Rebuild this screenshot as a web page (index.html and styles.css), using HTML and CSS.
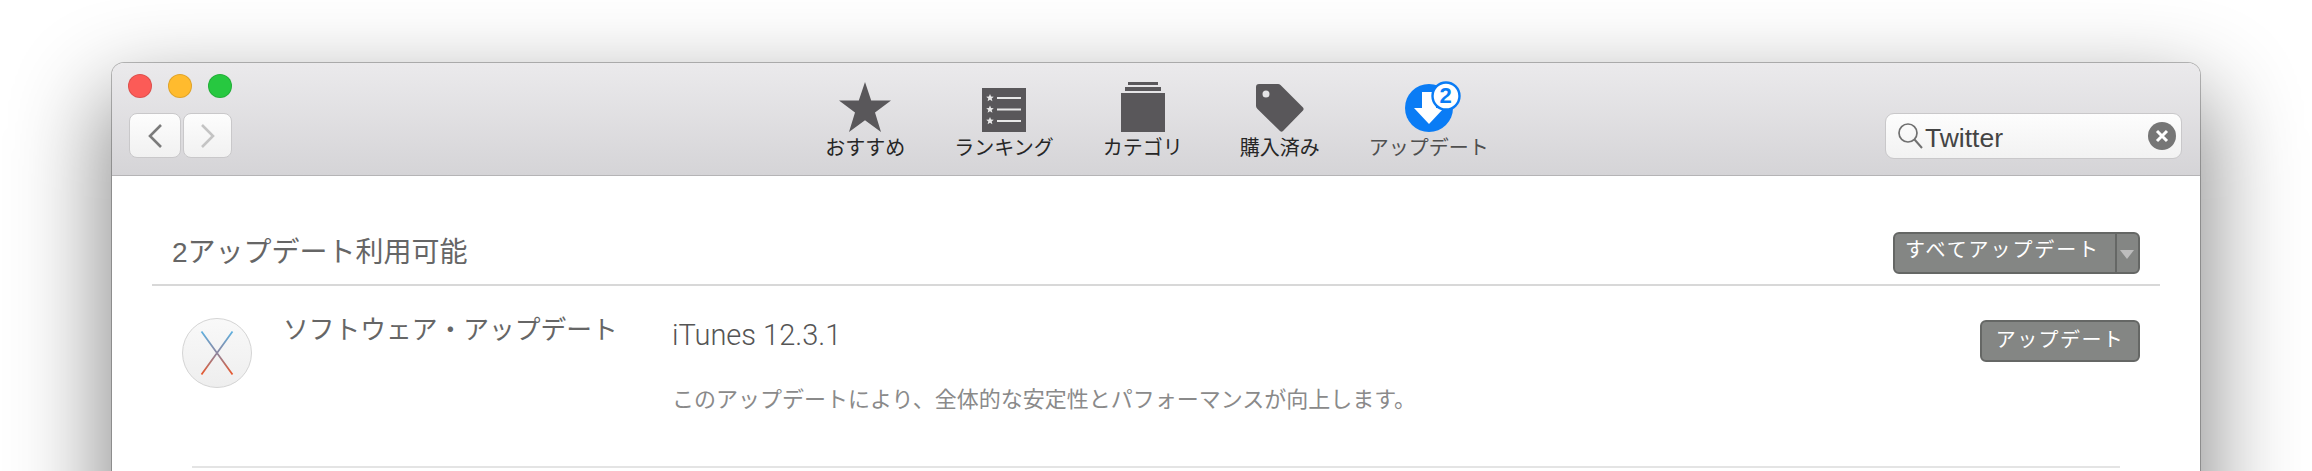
FILE: index.html
```html
<!DOCTYPE html>
<html lang="ja">

<head>
    <meta charset="UTF-8">
    <title>App Store</title>
    <link rel="stylesheet" href="styles.css">
</head>

<body>
    <div class="window">
        <header class="toolbar">
            <div class="leftControls">
                <div class="lights">
                    <span class="light red"></span>
                    <span class="light yellow"></span>
                    <span class="light green"></span>
                </div>
                <div class="navButtons">
                    <button class="nav back">
                        <svg width="16" height="26" viewBox="0 0 16 26"><path d="M14 2 3 13l11 11" fill="none" stroke="#7b7b7b" stroke-width="2.6"/></svg>
                    </button>
                    <button class="nav forward">
                        <svg width="16" height="26" viewBox="0 0 16 26"><path d="M2 2l11 11L2 24" fill="none" stroke="#c4c4c4" stroke-width="2.6"/></svg>
                    </button>
                </div>
            </div>

            <nav class="tabs">
                <div class="tab">
                    <svg width="52" height="50" viewBox="0 0 52 50"><path class="iconFill" d="M26 0l6.2 18.6H52L36 30.400l6 19.600L26 38.200 10 50l6-19.600L0 18.600h19.800z"/></svg>
                    <span>おすすめ</span>
                </div>
                <div class="tab">
                    <svg width="44" height="50" viewBox="0 0 44 50">
                        <rect class="iconFill" y="6" width="44" height="44"/>
                        <path d="M15 16h24M15 27.500h24M15 39h24" stroke="#e8e8e8" stroke-width="2"/>
                        <path d="M8 12l1.100 2.600 2.700.200-2.100 1.800.700 2.700L8 17.800l-2.400 1.500.700-2.700-2.100-1.800 2.700-.200zM8 23.500l1.100 2.600 2.700.200-2.100 1.800.700 2.700L8 29.300l-2.400 1.500.700-2.700-2.100-1.800 2.700-.200zM8 35l1.100 2.600 2.700.200-2.100 1.800.700 2.700L8 40.800l-2.400 1.500.700-2.700-2.100-1.800 2.700-.200z" fill="#e8e8e8"/>
                    </svg>
                    <span>ランキング</span>
                </div>
                <div class="tab">
                    <svg width="44" height="50" viewBox="0 0 44 50">
                        <rect class="iconFill" x="7" width="30" height="3"/>
                        <rect class="iconFill" x="4" y="5" width="36" height="4"/>
                        <rect class="iconFill" y="11" width="44" height="39"/>
                    </svg>
                    <span>カテゴリ</span>
                </div>
                <div class="tab purchased">
                    <svg width="48" height="50" viewBox="0 0 48 50"><path class="iconFill" fill-rule="evenodd" d="M3 2h19q1.500 0 2.500 1L47 25.500q1.200 1.500 0 3L27 49q-1.500 1.500-3 0L1.500 27Q0 25.500 0 24V5q0-3 3-3zM10 8.500a3.500 3.500 0 1 0 0 7 3.500 3.500 0 0 0 0-7z"/></svg>
                    <span>購入済み</span>
                </div>
                <div class="tab current">
                    <div class="updateIcon">
                        <svg width="62" height="52" viewBox="0 0 62 52">
                            <circle cx="24" cy="28" r="24" fill="#0a7cf5"/>
                            <path d="M17 12h14v16h8L24 44 9 28h8z" fill="#fff"/>
                            <circle cx="41" cy="16" r="13.500" fill="#fff" stroke="#0a7cf5" stroke-width="2.400"/>
                        </svg>
                        <span class="badge">2</span>
                    </div>
                    <span>アップデート</span>
                </div>
            </nav>

            <div class="searchWrap">
                <div class="search">
                    <svg width="26" height="28" viewBox="0 0 26 28"><circle cx="11" cy="11" r="9" fill="none" stroke="#707070" stroke-width="1.700"/><path d="M17.500 17.500 25 26" stroke="#707070" stroke-width="2"/></svg>
                    <span class="query">Twitter</span>
                    <span class="clear">
                        <svg width="14" height="14" viewBox="0 0 14 14"><path d="M2 2l10 10M12 2 2 12" stroke="#fff" stroke-width="3"/></svg>
                    </span>
                </div>
            </div>
        </header>

        <main class="content">
            <div class="sectionHead">
                <h2>2アップデート利用可能</h2>
                <div class="splitButton">
                    <span class="splitLabel">すべてアップデート</span>
                    <span class="splitArrow"></span>
                </div>
            </div>

            <div class="updateRow">
                <div class="appIcon">
                    <svg width="70" height="70" viewBox="0 0 70 70">
                        <defs>
                            <linearGradient id="xStroke" x1="0" y1="0" x2="0" y2="1">
                                <stop offset="0" stop-color="#5fb1e0"/>
                                <stop offset=".5" stop-color="#8d86a0"/>
                                <stop offset="1" stop-color="#e9582c"/>
                            </linearGradient>
                            <linearGradient id="discFill" x1="0" y1="0" x2="0" y2="1">
                                <stop offset="0" stop-color="#f9f9f9"/>
                                <stop offset="1" stop-color="#eeeeee"/>
                            </linearGradient>
                        </defs>
                        <circle cx="35" cy="35" r="34.500" fill="url(#discFill)" stroke="#d4d4d4"/>
                        <path d="M19.500 13.500 50.500 56.500M50.500 13.500 19.500 56.500" stroke="url(#xStroke)" stroke-width="1.800" fill="none"/>
                    </svg>
                </div>
                <div class="appName">ソフトウェア・アップデート</div>
                <div class="appInfo">
                    <div class="version">iTunes 12.3.1</div>
                    <p class="note">このアップデートにより、全体的な安定性とパフォーマンスが向上します。</p>
                </div>
                <button class="updateButton">アップデート</button>
            </div>
        </main>
    </div>
</body>

</html>
```

FILE: styles.css
```css
html,
body {
    margin: 0;
    height: 471px;
    overflow: hidden;
    background-color: #ffffff;
}

body {
    font-family: "Liberation Sans", "Noto Sans CJK JP", sans-serif;
    padding: 63px 112px 0;
    box-sizing: border-box;
}

.window {
    height: 600px;
    background-color: #ffffff;
    border-radius: 12px 12px 0 0;
    box-shadow: 0 0 0 1px rgba(0, 0, 0, 0.25), 0 40px 90px 10px rgba(0, 0, 0, 0.45);
}

.toolbar {
    display: grid;
    grid-template-columns: 1fr auto 1fr;
    height: 112px;
    background-image: linear-gradient(#ebeaec, #d5d4d7);
    border-bottom: 1px solid #b5b4b6;
    border-radius: 12px 12px 0 0;
}

.leftControls {
    padding: 11px 0 0 16px;
}

.lights {
    display: flex;
    gap: 16px;
}

.light {
    width: 22px;
    height: 22px;
    border-radius: 50%;
    border: 1px solid rgba(0, 0, 0, 0.12);
}

.red {
    background-color: #fc5b57;
}

.yellow {
    background-color: #ffbb2e;
}

.green {
    background-color: #27c840;
}

.navButtons {
    display: flex;
    gap: 2px;
    margin: 15px 0 0 1px;
}

.nav {
    display: flex;
    align-items: center;
    justify-content: center;
    width: 52px;
    height: 45px;
    padding: 0;
    background-image: linear-gradient(#fdfdfd, #f1f1f1);
    border: 1px solid #c9c8ca;
    border-radius: 8px;
}

.forward {
    width: 49px;
}

.tabs {
    display: flex;
    gap: 49px;
    padding: 19px 0 0 2px;
}

.tab {
    display: flex;
    flex-direction: column;
    align-items: center;
    font-size: 20px;
    line-height: 24px;
    color: #262626;
}

.tab svg {
    display: block;
}

.tab > span {
    margin-top: 4px;
}

.purchased {
    margin-left: 8px;
}

.iconFill {
    fill: #59575a;
}

.current {
    color: #4f4f4f;
}

.updateIcon {
    position: relative;
    width: 48px;
    height: 50px;
}

.updateIcon svg {
    margin-top: -2px;
}

.badge {
    position: absolute;
    top: 2px;
    left: 26px;
    width: 30px;
    text-align: center;
    font-size: 22px;
    line-height: 24px;
    font-weight: 700;
    color: #0a7cf5;
}

.searchWrap {
    display: flex;
    justify-content: flex-end;
    padding: 50px 18px 0 0;
}

.search {
    display: flex;
    align-items: center;
    width: 297px;
    height: 46px;
    box-sizing: border-box;
    padding: 0 5px 0 11px;
    background-image: linear-gradient(#fdfdfd, #f2f2f2);
    border: 1px solid #c9c8ca;
    border-radius: 9px;
}

.query {
    flex: 1;
    margin-left: 2px;
    padding-top: 4px;
    font-size: 26.500px;
    color: #444444;
}

.clear {
    display: flex;
    align-items: center;
    justify-content: center;
    width: 28px;
    height: 28px;
    border-radius: 50%;
    background-color: #767676;
}

.content {
    padding: 0 40px 0 40px;
}

.sectionHead {
    display: flex;
    justify-content: space-between;
    align-items: flex-end;
    height: 110px;
    padding: 0 20px 10px 20px;
    box-sizing: border-box;
    border-bottom: 2px solid #d8d8d8;
}

.sectionHead h2 {
    margin: 0 0 3px;
    font-size: 28px;
    line-height: 36px;
    font-weight: 400;
    color: #666666;
}

.splitButton {
    display: flex;
    height: 42px;
    box-sizing: border-box;
    background-color: #848684;
    border: 2px solid #656765;
    border-radius: 6px;
}

.splitLabel {
    padding: 0 15px 0 10px;
    font-size: 20px;
    line-height: 32px;
    letter-spacing: 1.900px;
    color: #ffffff;
    border-right: 2px solid #656765;
}

.splitArrow {
    width: 21px;
    position: relative;
}

.splitArrow::after {
    content: "";
    position: absolute;
    left: 3px;
    top: 16px;
    border-left: 7px solid transparent;
    border-right: 7px solid transparent;
    border-top: 9px solid #bdbdbd;
}

.updateRow {
    display: flex;
    align-items: flex-start;
    height: 182px;
    margin: 0 40px;
    padding-top: 31px;
    box-sizing: border-box;
    border-bottom: 2px solid #e4e4e4;
}

.appIcon {
    width: 70px;
    height: 70px;
    margin: 1px 0 0 -10px;
}

.appName {
    width: 389px;
    margin: -4px 0 0 31px;
    font-size: 25.750px;
    line-height: 34px;
    color: #666666;
}

.appInfo {
    flex: 1;
    margin-top: -1px;
}

.version {
    font-family: "Roboto", sans-serif;
    font-weight: 300;
    font-size: 29px;
    line-height: 38px;
    color: #555555;
}

.note {
    margin: 30px 0 0;
    font-size: 22px;
    line-height: 32px;
    color: #8a8a8a;
}

.updateButton {
    width: 160px;
    height: 42px;
    margin: 3px -20px 0 0;
    padding: 0 0 5px;
    font-family: inherit;
    font-size: 20px;
    letter-spacing: 1.400px;
    color: #ffffff;
    background-color: #848684;
    border: 2px solid #656765;
    border-radius: 6px;
}
```
